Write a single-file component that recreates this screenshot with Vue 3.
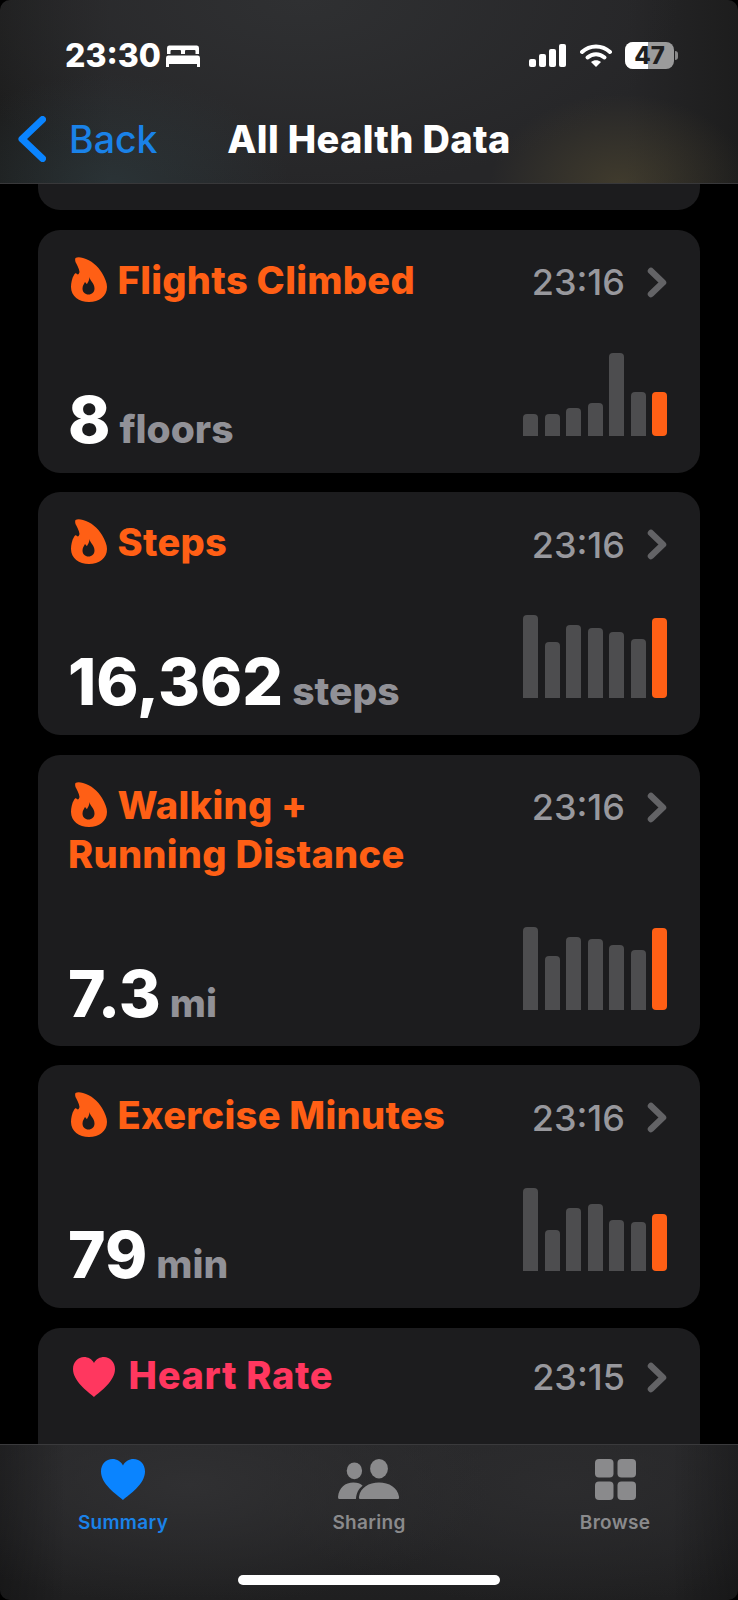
<template>

<div class="screen">

    <!-- Cards -->

    <div class="list">

        <div class="card card-cut"></div>

        <div
            v-for="item in items"
            :key="item.title"
            class="card"
            :class="{ 'card-heart': item.heart }"
        >

            <div class="card-top">

                <div
                    class="card-title"
                    :class="{ heart: item.heart }"
                >

                    <svg
                        v-if="item.heart"
                        class="title-heart"
                        viewBox="0 0 42 40"
                    >
                        <path :d="heartPath" fill="#ff375f" />
                    </svg>

                    <svg
                        v-else
                        class="flame"
                        viewBox="0 0 36 45"
                    >
                        <path fill-rule="evenodd" fill="#ff5f15" :d="flamePath" />
                    </svg>

                    {{ item.title }}

                </div>

                <div class="card-time">

                    {{ item.time }}

                    <svg class="chevron" viewBox="0 0 20 31">
                        <path d="M4 4 L16 15.5 L4 27" />
                    </svg>

                </div>

            </div>

            <div
                v-if="item.bars"
                class="card-bottom"
            >

                <div class="value">

                    {{ item.value }}<span class="unit">{{ item.unit }}</span>

                </div>

                <div class="bars">

                    <div
                        v-for="(h, i) in item.bars"
                        :key="i"
                        class="bar"
                        :class="{ current: i === item.bars.length - 1 }"
                        :style="{ height: h + 'px' }"
                    ></div>

                </div>

            </div>

        </div>

    </div>

    <!-- Header -->

    <div class="header">

        <div class="status">

            <div class="status-left">

                <span class="clock">23:30</span>

                <svg class="bed" viewBox="0 0 34 22">
                    <path fill="#fff" d="M3 0.5 H31 Q33 0.5 33 3 V9 H29.5 V6 Q29.5 5 28.5 5 H20 Q19 5 19 6 V9 H15 V6 Q15 5 14 5 H5.5 Q4.5 5 4.5 6 V9 H1 V3 Q1 0.5 3 0.5 Z" />
                    <path fill="#fff" d="M2 10.5 H32 Q34 10.5 34 13 V22 H31 V19 H3 V22 H0 V13 Q0 10.5 2 10.5 Z" />
                </svg>

            </div>

            <div class="status-right">

                <svg class="signal" viewBox="0 0 37 23">
                    <rect x="0" y="15" width="7" height="8" rx="2" fill="#fff" />
                    <rect x="10" y="10" width="7" height="13" rx="2" fill="#fff" />
                    <rect x="20" y="5" width="7" height="18" rx="2" fill="#fff" />
                    <rect x="30" y="0" width="7" height="23" rx="2" fill="#fff" />
                </svg>

                <svg class="wifi" viewBox="0 0 32 23">
                    <path d="M2 8 C10 0.5 22 0.5 30 8" />
                    <path d="M7.5 13.5 C12.5 9 19.5 9 24.5 13.5" />
                    <path class="wifi-dot" d="M16 23 L11 18 C14 15.8 18 15.8 21 18 Z" />
                </svg>

                <div class="battery">

                    <div class="battery-fill"></div>

                    <span class="battery-text">47</span>

                    <div class="battery-nub"></div>

                </div>

            </div>

        </div>

        <div class="nav">

            <div class="back">

                <svg class="back-icon" viewBox="0 0 28 46">
                    <path d="M24.5 3.5 L4 23 L24.5 42.5" />
                </svg>

                <span>Back</span>

            </div>

            <div class="nav-title">

                All Health Data

            </div>

        </div>

    </div>

    <!-- Tab bar -->

    <div class="tabbar">

        <div class="tabs">

            <div class="tab active">

                <svg class="tab-icon" viewBox="0 0 44 41">
                    <path :d="tabHeartPath" fill="#0a84ff" />
                </svg>

                Summary

            </div>

            <div class="tab">

                <svg class="tab-icon" viewBox="0 0 60 40">
                    <ellipse cx="16" cy="11.5" rx="7.5" ry="8.2" fill="#8a8a8c" />
                    <ellipse cx="40" cy="9.5" rx="8.7" ry="9.5" fill="#8a8a8c" />
                    <path fill="#8a8a8c" d="M1 39 Q0 39 0 37 C1 28 7 23 15 23 C19 23 22 24 24 26 C20 29 18 33 17.5 39 Z" />
                    <path fill="#8a8a8c" d="M22 39 Q20 39 20.500 36.500 C22 28 30 23 40 23 C50 23 58 28 59.500 36.500 Q60 39 58 39 Z" />
                </svg>

                Sharing

            </div>

            <div class="tab">

                <svg class="tab-icon" viewBox="0 0 41 41">
                    <rect x="0" y="0" width="18.500" height="18.500" rx="4" fill="#8a8a8c" />
                    <rect x="22.500" y="0" width="18.500" height="18.500" rx="4" fill="#8a8a8c" />
                    <rect x="0" y="22.500" width="18.500" height="18.500" rx="4" fill="#8a8a8c" />
                    <rect x="22.500" y="22.500" width="18.500" height="18.500" rx="4" fill="#8a8a8c" />
                </svg>

                Browse

            </div>

        </div>

        <div class="home-bar"></div>

    </div>

</div>

</template>

<script setup>

const flamePath = 'M4.500 1 C6 0 9 0 12 1 C20 3 27 9 31 16 C34 21 36 26 36 30 C36 39 28 45 18 45 C8 45 0 39 0 30 C0 26 1 21 3 18 C4 16 5 16 6 17 C7 18 8 17 8.500 15 C8 11 6 8 4.500 5 C4 3 4 2 4.500 1 Z M18.500 20 C19 24 23.500 26 23.500 31.500 C23.500 35 21 37.500 17.500 37.500 C14 37.500 11.500 35 11.500 31.500 C11.500 28.500 13 27 14 25 C15 26 15.500 27 16 27 C17 25 18.500 23 18.500 20 Z'

const heartPath = 'M21 40 C14 34 0 24 0 12 C0 5 5 0 11 0 C15 0 19 2 21 6 C23 2 27 0 31 0 C37 0 42 5 42 12 C42 24 28 34 21 40 Z'

const tabHeartPath = 'M22 41 C15 35 0 25 0 12.500 C0 5 5 0 11.500 0 C16 0 20 2.500 22 6.500 C24 2.500 28 0 32.500 0 C39 0 44 5 44 12.500 C44 25 29 35 22 41 Z'

const items = [

    {
        title: 'Flights Climbed',
        time: '23:16',
        value: '8',
        unit: 'floors',
        bars: [22, 22, 28, 33, 83, 44, 44]
    },

    {
        title: 'Steps',
        time: '23:16',
        value: '16,362',
        unit: 'steps',
        bars: [83, 56, 73, 70, 66, 59, 80]
    },

    {
        title: 'Walking + Running Distance',
        time: '23:16',
        value: '7.3',
        unit: 'mi',
        bars: [83, 54, 73, 71, 65, 60, 82]
    },

    {
        title: 'Exercise Minutes',
        time: '23:16',
        value: '79',
        unit: 'min',
        bars: [83, 41, 63, 67, 51, 49, 57]
    },

    {
        title: 'Heart Rate',
        time: '23:15',
        heart: true
    }
]

</script>

<style>

html,
body {

    margin: 0;

    background: #000;
}

</style>

<style scoped>

.screen {

    position: relative;

    width: 738px;

    height: 1600px;

    overflow: hidden;

    background: #000;

    font-family: Inter, "Liberation Sans", sans-serif;
}

/* Cards */

.list {

    display: flex;

    flex-direction: column;

    gap: 19.5px;

    padding: 0 38px;
}

.card {

    box-sizing: border-box;

    height: 243px;

    padding: 26px 33px 0 30px;

    background: #1c1c1e;

    border-radius: 22px;
}

.card:nth-child(4) {

    height: 291px;
}

.card:nth-child(4) .card-bottom {

    margin-top: 48px;
}

.card-cut {

    height: 210px;
}

.card-top {

    display: flex;

    justify-content: space-between;

    align-items: flex-start;
}

.card-heart .card-top {

    margin-top: -3px;
}

.card-title {

    max-width: 395px;

    font-size: 38px;

    line-height: 49px;

    font-weight: 800;

    letter-spacing: 0.3px;

    color: #ff5f15;
}

.card-title.heart {

    color: #ff375f;

    letter-spacing: 0.7px;
}

.flame {

    width: 36px;

    height: 45px;

    margin: 0 2px 0 3px;

    vertical-align: -8px;
}

.title-heart {

    width: 42px;

    height: 40px;

    margin: 0 4.5px 0 5px;

    vertical-align: -8px;
}

.card-time {

    display: flex;

    align-items: center;

    gap: 22px;

    height: 49px;

    margin-top: 2px;

    font-size: 36px;

    font-weight: 500;

    color: #98989d;
}

.chevron {

    width: 20px;

    height: 31px;

    fill: none;

    stroke: #636366;

    stroke-width: 6.5;

    stroke-linecap: round;

    stroke-linejoin: round;
}

.card-bottom {

    display: flex;

    justify-content: space-between;

    align-items: flex-end;

    height: 83px;

    margin-top: 46px;
}

.value {

    font-size: 64px;

    line-height: 64px;

    font-weight: 800;

    color: #fff;

    margin-bottom: -25px;
}

.unit {

    margin-left: 9px;

    font-size: 39px;

    font-weight: 800;

    color: #919197;
}

.bars {

    display: flex;

    align-items: flex-end;

    gap: 6.5px;
}

.bar {

    width: 15px;

    background: #4d4d4f;

    border-radius: 4px 4px 0 0;
}

.bar.current {

    background: #ff5f15;

    border-radius: 4px;
}

/* Header */

.header {

    position: absolute;

    top: 0;

    left: 0;

    right: 0;

    height: 184px;

    border-radius: 10px 10px 0 0;

    border-bottom: 1px solid #38383a;

    box-sizing: border-box;

    background:
        radial-gradient(ellipse 130px 90px at 620px 184px, rgba(90, 80, 50, 0.5), transparent),
        radial-gradient(ellipse 180px 110px at 110px 184px, rgba(50, 75, 80, 0.35), transparent),
        radial-gradient(ellipse 380px 190px at 300px 0, #2f3032, transparent),
        linear-gradient(90deg, #1d1d1d, #262628 15%, #262628 85%, #1d1d1d);
}

.status {

    display: flex;

    justify-content: space-between;

    align-items: center;

    height: 23px;

    padding: 44px 64px 0 65px;
}

.status-left {

    display: flex;

    align-items: center;

    gap: 5px;
}

.clock {

    font-size: 32px;

    font-weight: 800;

    color: #fff;
}

.bed {

    width: 34px;

    height: 22px;
}

.status-right {

    display: flex;

    align-items: center;
}

.signal {

    width: 37px;

    height: 23px;

    margin-right: 14px;
}

.wifi {

    width: 32px;

    height: 23px;

    margin-right: 13px;

    fill: none;

    stroke: #fff;

    stroke-width: 4;

    stroke-linecap: round;
}

.wifi-dot {

    fill: #fff;

    stroke: none;
}

.battery {

    position: relative;

    width: 49px;

    height: 27px;

    border-radius: 8px;

    background: #9b9b9b;
}

.battery-fill {

    position: absolute;

    left: 0;

    top: 0;

    bottom: 0;

    width: 23px;

    background: #fff;

    border-radius: 8px 0 0 8px;
}

.battery-text {

    position: absolute;

    inset: 0;

    text-align: center;

    font-size: 24px;

    line-height: 27px;

    font-weight: 800;

    color: #1f1f1f;
}

.battery-nub {

    position: absolute;

    right: -4px;

    top: 9px;

    width: 3px;

    height: 9px;

    background: #8a8a8a;

    border-radius: 0 3px 3px 0;
}

.nav {

    position: relative;

    height: 60px;

    margin-top: 42px;
}

.back {

    display: flex;

    align-items: center;

    gap: 23px;

    padding-left: 18px;

    height: 60px;

    font-size: 37.5px;

    font-weight: 500;

    color: #1a82e8;
}

.back-icon {

    width: 28px;

    height: 46px;

    fill: none;

    stroke: #0a84ff;

    stroke-width: 7;

    stroke-linecap: round;

    stroke-linejoin: round;
}

.nav-title {

    position: absolute;

    top: 0;

    left: 0;

    right: 0;

    text-align: center;

    font-size: 38px;

    line-height: 60px;

    font-weight: 800;

    letter-spacing: 0.35px;

    color: #fff;
}

/* Tab bar */

.tabbar {

    position: absolute;

    left: 0;

    right: 0;

    bottom: 0;

    height: 156px;

    box-sizing: border-box;

    border-top: 1px solid #3a3a3c;

    border-radius: 0 0 10px 10px;

    background:
        linear-gradient(90deg, rgba(0, 0, 0, 0.25), transparent 9%, transparent 91%, rgba(0, 0, 0, 0.25)),
        radial-gradient(ellipse 300px 120px at 190px 40px, #303032, transparent),
        radial-gradient(ellipse 300px 120px at 560px 40px, #2c2c2e, transparent),
        linear-gradient(#272729, #1f1f20);
}

.tabs {

    display: grid;

    grid-template-columns: repeat(3, 246px);

    padding-top: 14px;
}

.tab {

    display: flex;

    flex-direction: column;

    align-items: center;

    gap: 11px;

    font-size: 19px;

    line-height: 24px;

    font-weight: 600;

    letter-spacing: 0.3px;

    color: #8a8a8c;
}

.tab.active {

    color: #1a82e8;
}

.tab-icon {

    height: 41px;
}

.home-bar {

    position: absolute;

    left: 238px;

    bottom: 15px;

    width: 262px;

    height: 10px;

    border-radius: 5px;

    background: #fff;
}

</style>
